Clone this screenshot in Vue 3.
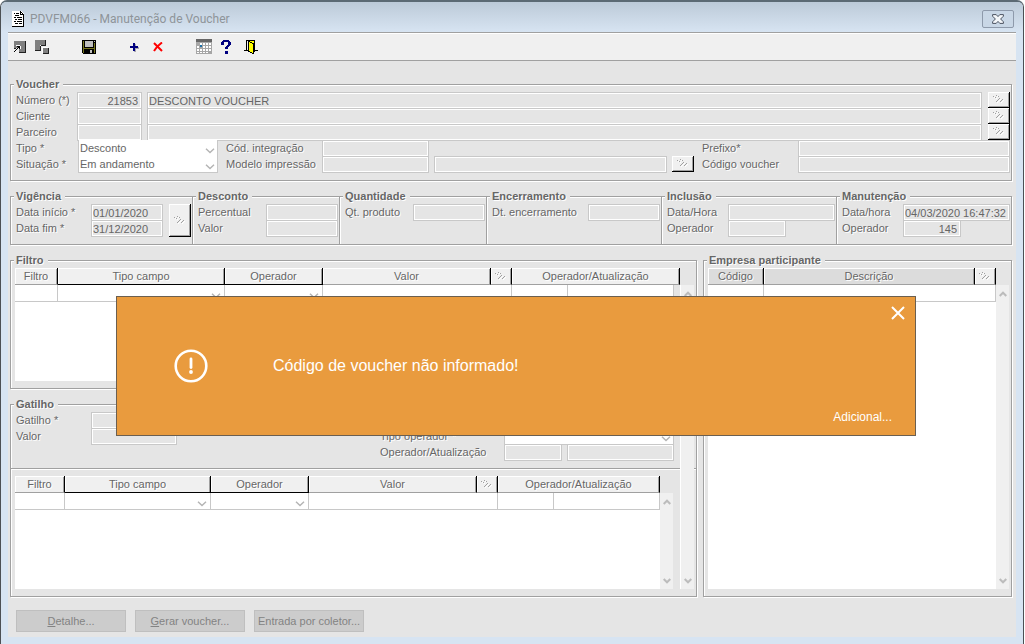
<script setup>
import { ref } from 'vue'

const people = [
  { id: 'numero', label: 'Número (*)', code: '21853', name: 'DESCONTO VOUCHER' },
  { id: 'cliente', label: 'Cliente', code: '', name: '' },
  { id: 'parceiro', label: 'Parceiro', code: '', name: '' }
]

const headings = ['Filtro', 'Tipo campo', 'Operador', 'Valor']

const tipo = ref('Desconto')
const situacao = ref('Em andamento')
const alertOpen = ref(true)
</script>

<template>
  <div class="window">
    <svg class="defs" aria-hidden="true">
      <symbol id="lookup" viewBox="0 0 11 9">
        <path fill="#fff" d="M1 2h1v1h-1zM3 3h1v1h-1zM4 1h1v1h-1zM4 7h1v1h-1zM5 6h1v1h-1zM6 5h1v1h-1zM7 4h1v1h-1zM8 7h1v1h-1zM9 6h1v1h-1zM10 5h1v1h-1z" />
        <path fill="#a0a0a0" d="M0 1h1v1h-1zM2 2h1v1h-1zM3 0h1v1h-1zM5 1h1v1h-1zM3 6h1v1h-1zM4 5h1v1h-1zM5 4h1v1h-1zM6 3h1v1h-1zM7 6h1v1h-1zM8 5h1v1h-1zM9 4h1v1h-1z" />
      </symbol>
      <symbol id="down" viewBox="0 0 10 6">
        <path fill="none" stroke="#b4b4b4" stroke-width="1.4" d="M1 .8L5 4.6L9 .8" />
      </symbol>
      <symbol id="arrow-up" viewBox="0 0 8 6">
        <path fill="none" stroke="#bcbcbc" stroke-width="2" d="M.7 5L4 1.7L7.3 5" />
      </symbol>
      <symbol id="arrow-down" viewBox="0 0 8 6">
        <path fill="none" stroke="#bcbcbc" stroke-width="2" d="M.7 1L4 4.3L7.3 1" />
      </symbol>
    </svg>

    <header class="titlebar">
      <svg class="doc" viewBox="0 0 13 17" shape-rendering="crispEdges" aria-hidden="true">
        <path fill="#fff" d="M0 0h9l3 3v13H0z" />
        <path fill="#000" d="M0 15h12v1H0zM11 3h1v13h-1zM8 0h1v3h3v1H8zM9 1h1v1H9zM10 2h1v1h-1z" />
        <path fill="#000" d="M2 2h1v1H2zM4 2h3v1H4zM3 4h4v1H3zM2 6h2v1H2zM5 6h5v1H5zM3 8h2v1H3zM6 8h4v1H6zM2 10h2v1H2zM5 10h5v1H5zM3 12h3v1H3zM7 12h3v1H7z" />
      </svg>
      <h1>PDVFM066 - Manutenção de Voucher</h1>
      <button type="button" class="close" aria-label="Fechar janela">
        <svg width="12" height="10" viewBox="0 0 12 10" aria-hidden="true">
          <path fill="#f4f7fa" stroke="#4a5260" d="M.6.6h3.600L6 2.600L7.800.6h3.600v1.600L8.600 5l2.800 2.800v1.600H7.800L6 7.400L4.200 9.400H.6V7.800L3.400 5L.6 2.200z" />
        </svg>
      </button>
    </header>

    <nav class="toolbar" aria-label="Ferramentas">
      <button type="button" aria-label="Selecionar">
        <svg width="12" height="12" viewBox="0 0 12 12" shape-rendering="crispEdges">
          <path fill="#808080" d="M0 0h11v11H5V7H0z" />
          <path fill="#222" d="M11 0h1v12H5v-1h6zM0 7h2v1H0z" />
          <path fill="#fff" d="M2 4h4v1H2zM6 5h1v3H6zM4 6h1v1H4zM3 7h1v1H3zM2 8h1v1H2zM1 9h1v1H1z" />
          <path fill="#000" d="M3 5h3v3H5V7H4v1H3v1H2v1H1v1H0v-1h1V9h1V8h1V7h1V6H3z" />
        </svg>
      </button>
      <button type="button" aria-label="Limpar">
        <svg width="14" height="14" viewBox="0 0 14 14" shape-rendering="crispEdges">
          <path fill="#808080" d="M0 0h10v5H5v5H0z" />
          <path fill="#222" d="M10 0h1v6H6V5h4zM0 10h5V6h1v5H0z" />
          <path fill="#fff" d="M7 7h6v1H8v5H7z" />
          <path fill="#808080" d="M8 8h5v5H8z" />
          <path fill="#222" d="M13 8h1v6H8v-1h5z" />
        </svg>
      </button>
      <button type="button" class="gap-save" aria-label="Salvar">
        <svg width="14" height="14" viewBox="0 0 14 14" shape-rendering="crispEdges">
          <path fill="#000" d="M0 0h14v14H1l-1-1z" />
          <path fill="#77771f" d="M1 1h1v12H1zM12 3h1v10h-1zM2 8h10v1H2z" />
          <path fill="#c0c0c0" d="M3 1h8v6H3zM12 1h1v1h-1zM8 10h2v3H8z" />
        </svg>
      </button>
      <button type="button" class="gap-add" aria-label="Adicionar">
        <svg width="10" height="10" viewBox="0 0 10 10" shape-rendering="crispEdges">
          <path fill="#a8a8b0" d="M5 2h2v3h3v2H7v3H5z" />
          <path fill="#000080" d="M4 1h2v3h3v2H6v3H4V6H1V4h3z" />
        </svg>
      </button>
      <button type="button" class="gap-del" aria-label="Excluir">
        <svg width="10" height="10" viewBox="0 0 10 10">
          <path fill="none" stroke="#f00" stroke-width="2" d="M1 1L9 9M9 .5Q4 4 1 9" />
        </svg>
      </button>
      <button type="button" class="gap-cal" aria-label="Calendário">
        <svg width="16" height="16" viewBox="0 0 16 16" shape-rendering="crispEdges">
          <path fill="#a6a6a6" d="M0 3h16v12H0z" />
          <path fill="#666" d="M0 0h16v3H0z" />
          <path fill="#fff" d="M4 4h2v2H4zM7 4h2v2H7zM10 4h2v2h-2zM13 4h2v2h-2zM1 7h2v2H1zM7 7h2v2H7zM10 7h2v2h-2zM13 7h2v2h-2zM1 10h2v2H1zM4 10h2v2H4zM7 10h2v2H7zM10 10h2v2h-2zM13 10h2v2h-2zM1 13h2v1H1zM4 13h2v1H4zM7 13h2v1H7zM10 13h2v1h-2z" />
          <path fill="#1c6fa5" d="M4 6h2v2H4z" />
        </svg>
      </button>
      <button type="button" aria-label="Ajuda">
        <svg width="10" height="14" viewBox="0 0 10 14" shape-rendering="crispEdges">
          <path fill="#000080" d="M2 0h6v1h1v1h1v3H9v1H8v1H7v2H4V7h1V6h1V5h1V2H3v3H0V2h1V1h1zM4 11h3v3H4z" />
        </svg>
      </button>
      <button type="button" class="gap-exit" aria-label="Sair">
        <svg width="14" height="14" viewBox="0 0 14 14" shape-rendering="crispEdges">
          <path fill="#000" d="M2 0h9v10h3v1h-3v1h-1V1H3v9h1v1H0v-1h2z" />
          <path fill="#000" d="M4 1h2v1h2v1h2v11H8v-1H6v-1H4z" />
          <path fill="#ff0" d="M5 2h1v1h2v1h1v9H8v-1H6v-1H5zM6 1h4v2H8V2H6z" />
        </svg>
      </button>
    </nav>

    <main class="content">
      <fieldset>
        <legend>Voucher</legend>
        <div v-for="p in people" :key="p.id" class="row person">
          <label :for="p.id">{{ p.label }}</label>
          <input :id="p.id" class="right" type="text" :value="p.code" readonly />
          <input class="second" type="text" :value="p.name" readonly :aria-label="p.label + ' descrição'" />
          <button type="button" class="lookup" :aria-label="'Procurar ' + p.label"><svg><use href="#lookup" /></svg></button>
        </div>
        <div class="row detail">
          <label for="tipo">Tipo *</label>
          <span class="select">
            <select id="tipo" v-model="tipo"><option>Desconto</option></select>
            <svg><use href="#down" /></svg>
          </span>
          <label for="integracao" class="indent">Cód. integração</label>
          <input id="integracao" type="text" readonly />
          <label for="prefixo" class="indent prefix">Prefixo*</label>
          <input id="prefixo" class="last" type="text" readonly />
        </div>
        <div class="row detail">
          <label for="situacao">Situação *</label>
          <span class="select">
            <select id="situacao" v-model="situacao"><option>Em andamento</option></select>
            <svg><use href="#down" /></svg>
          </span>
          <label for="modelo" class="indent">Modelo impressão</label>
          <input id="modelo" type="text" readonly />
          <input class="model-name" type="text" readonly aria-label="Nome do modelo" />
          <button type="button" class="lookup model-find" aria-label="Procurar modelo"><svg><use href="#lookup" /></svg></button>
          <label for="codigo" class="indent prefix">Código voucher</label>
          <input id="codigo" class="last" type="text" readonly />
        </div>
      </fieldset>

      <div class="groups">
        <fieldset class="vigencia">
          <legend>Vigência</legend>
          <div class="fields">
            <label for="inicio">Data início *</label>
            <input id="inicio" type="text" value="01/01/2020" readonly />
            <label for="fim">Data fim *</label>
            <input id="fim" type="text" value="31/12/2020" readonly />
          </div>
          <button type="button" class="lookup tall" aria-label="Escolher período"><svg><use href="#lookup" /></svg></button>
        </fieldset>
        <fieldset>
          <legend>Desconto</legend>
          <div class="fields short">
            <label for="percentual">Percentual</label>
            <input id="percentual" type="text" readonly />
            <label for="desconto-valor">Valor</label>
            <input id="desconto-valor" type="text" readonly />
          </div>
        </fieldset>
        <fieldset>
          <legend>Quantidade</legend>
          <div class="fields short">
            <label for="quantidade">Qt. produto</label>
            <input id="quantidade" type="text" readonly />
          </div>
        </fieldset>
        <fieldset>
          <legend>Encerramento</legend>
          <div class="fields long">
            <label for="encerramento">Dt. encerramento</label>
            <input id="encerramento" type="text" readonly />
          </div>
        </fieldset>
        <fieldset>
          <legend>Inclusão</legend>
          <div class="fields audit">
            <label for="inclusao">Data/Hora</label>
            <input id="inclusao" type="text" readonly />
            <label for="inclusao-op">Operador</label>
            <input id="inclusao-op" class="small" type="text" readonly />
          </div>
        </fieldset>
        <fieldset>
          <legend>Manutenção</legend>
          <div class="fields audit">
            <label for="manutencao">Data/hora</label>
            <input id="manutencao" type="text" value="04/03/2020 16:47:32" readonly />
            <label for="manutencao-op">Operador</label>
            <input id="manutencao-op" class="small right" type="text" value="145" readonly />
          </div>
        </fieldset>
      </div>

      <div class="panels">
        <div class="stack">
          <fieldset class="filtro">
            <legend>Filtro</legend>
            <div class="sheet">
              <table>
                <colgroup>
                  <col class="c-filtro" /><col class="c-tipo" /><col class="c-operador" /><col />
                  <col class="c-find" /><col class="c-op" /><col class="c-at" /><col class="c-edge" />
                </colgroup>
                <thead>
                  <tr>
                    <th v-for="(h, i) in headings" :key="h" :class="{ dark: i === 1 || i === 2 }">{{ h }}</th>
                    <th><button type="button" aria-label="Procurar valor"><svg><use href="#lookup" /></svg></button></th>
                    <th colspan="3">Operador/Atualização</th>
                  </tr>
                </thead>
                <tbody>
                  <tr>
                    <td><input type="text" aria-label="Filtro" /></td>
                    <td><span class="select"><select aria-label="Tipo campo"></select><svg><use href="#down" /></svg></span></td>
                    <td><span class="select"><select aria-label="Operador"></select><svg><use href="#down" /></svg></span></td>
                    <td colspan="2"><input type="text" aria-label="Valor" /></td>
                    <td><input type="text" aria-label="Operador da atualização" /></td>
                    <td><input type="text" aria-label="Atualização" /></td>
                    <td></td>
                  </tr>
                </tbody>
              </table>
            </div>
          </fieldset>

          <fieldset class="gatilho">
            <legend>Gatilho</legend>
            <div class="trigger">
              <div class="fields">
                <label for="gatilho">Gatilho *</label>
                <input id="gatilho" type="text" readonly />
                <label for="gatilho-valor">Valor</label>
                <input id="gatilho-valor" type="text" readonly />
              </div>
              <div class="operator">
                <label for="tipo-op">Tipo operador *</label>
                <span class="select"><select id="tipo-op"></select><svg><use href="#down" /></svg></span>
                <label for="op-at">Operador/Atualização</label>
                <input id="op-at" type="text" readonly />
                <input class="update" type="text" readonly aria-label="Atualização do gatilho" />
              </div>
            </div>
            <hr />
            <div class="sheet-row">
              <div class="sheet">
                <table>
                  <colgroup>
                    <col class="c-filtro2" /><col class="c-tipo2" /><col class="c-operador" /><col />
                    <col class="c-find" /><col class="c-op" /><col class="c-at" />
                  </colgroup>
                  <thead>
                    <tr>
                      <th v-for="(h, i) in headings" :key="h" :class="{ dark: i === 1 || i === 2 }">{{ h }}</th>
                      <th><button type="button" aria-label="Procurar valor do gatilho"><svg><use href="#lookup" /></svg></button></th>
                      <th colspan="2">Operador/Atualização</th>
                    </tr>
                  </thead>
                  <tbody>
                    <tr>
                      <td><input type="text" aria-label="Filtro" /></td>
                      <td><span class="select"><select aria-label="Tipo campo"></select><svg><use href="#down" /></svg></span></td>
                      <td><span class="select"><select aria-label="Operador"></select><svg><use href="#down" /></svg></span></td>
                      <td colspan="2"><input type="text" aria-label="Valor" /></td>
                      <td><input type="text" aria-label="Operador da atualização" /></td>
                      <td><input type="text" aria-label="Atualização" /></td>
                    </tr>
                  </tbody>
                </table>
              </div>
              <div class="scroll">
                <button type="button" aria-label="Subir"><svg><use href="#arrow-up" /></svg></button>
                <button type="button" aria-label="Descer"><svg><use href="#arrow-down" /></svg></button>
              </div>
            </div>
          </fieldset>
          <div class="scroll outer">
            <button type="button" aria-label="Subir"><svg><use href="#arrow-up" /></svg></button>
            <button type="button" aria-label="Descer"><svg><use href="#arrow-down" /></svg></button>
          </div>
        </div>

        <fieldset class="empresa">
          <legend>Empresa participante</legend>
          <div class="sheet-row">
            <div class="sheet">
              <table class="flat">
                <colgroup><col class="c-op" /><col /><col class="c-find" /></colgroup>
                <thead>
                  <tr>
                    <th>Código</th>
                    <th>Descrição</th>
                    <th class="find"><button type="button" aria-label="Procurar empresa"><svg><use href="#lookup" /></svg></button></th>
                  </tr>
                </thead>
                <tbody>
                  <tr>
                    <td><input type="text" aria-label="Código" /></td>
                    <td colspan="2"><input type="text" aria-label="Descrição" /></td>
                  </tr>
                </tbody>
              </table>
            </div>
            <div class="scroll">
              <button type="button" aria-label="Subir"><svg><use href="#arrow-up" /></svg></button>
              <button type="button" aria-label="Descer"><svg><use href="#arrow-down" /></svg></button>
            </div>
          </div>
        </fieldset>
      </div>

      <footer class="actions">
        <button type="button"><u>D</u>etalhe...</button>
        <button type="button"><u>G</u>erar voucher...</button>
        <button type="button">Entrada por coletor...</button>
      </footer>
    </main>

    <section v-if="alertOpen" class="alert" role="alertdialog" aria-labelledby="alert-text">
      <svg class="warn" viewBox="0 0 34 34" aria-hidden="true">
        <circle cx="17" cy="17" r="15.300" fill="none" stroke="#fff" stroke-width="2.600" />
        <path stroke="#fff" stroke-width="2.800" stroke-linecap="round" d="M17 10V18.500" />
        <circle cx="17" cy="23" r="1.900" fill="#fff" />
      </svg>
      <p id="alert-text">Código de voucher não informado!</p>
      <button type="button" class="dismiss" aria-label="Fechar aviso" @click="alertOpen = false">
        <svg width="14" height="14" viewBox="0 0 14 14"><path stroke="#fff" stroke-width="2" d="M1 1L13 13M13 1L1 13" /></svg>
      </button>
      <a href="#" class="more" @click.prevent>Adicional...</a>
    </section>
  </div>
</template>

<style>
body {
  background: #fff;
}
</style>

<style scoped>
.window {
  position: relative;
  box-sizing: border-box;
  display: flex;
  flex-direction: column;
  min-height: 100vh;
  margin-right: 1px;
  padding: 0 7px 7px;
  border: solid #4c5054;
  border-width: 2px 1px 0;
  border-top-color: #5c6a74;
  border-radius: 7px 7px 0 0;
  background: #d7e4f2;
  color: #666;
  font: 11px/16px "Liberation Sans", Arial, sans-serif;
}
.window * {
  box-sizing: border-box;
}
.defs {
  position: absolute;
  width: 0;
  height: 0;
}
button,
input,
select {
  margin: 0;
  padding: 0;
  border: 0;
  border-radius: 0;
  background: none;
  color: inherit;
  font: inherit;
}
.titlebar {
  display: flex;
  align-items: center;
  height: 30px;
  margin: 0 -7px;
  padding: 4px 9px 0 11px;
  border-radius: 5px 5px 0 0;
  background: linear-gradient(#bccad8, #d7e4f2);
}
.doc {
  width: 13px;
  height: 17px;
}
h1 {
  flex: 1;
  margin: 0 0 0 5px;
  color: #8e9499;
  font: 400 12px/16px Roboto, "Open Sans", sans-serif;
}
.close {
  display: flex;
  align-items: center;
  justify-content: center;
  width: 32px;
  height: 18px;
  margin-bottom: 1px;
  border: 1px solid #8e9aab;
  border-radius: 2px;
  background: #c9d7e6;
}
.toolbar {
  display: flex;
  align-items: center;
  height: 29px;
  padding-left: 1px;
  border-top: 1px solid #a0a0a0;
  border-bottom: 1px solid #a0a0a0;
  background: #f0f0f0;
  box-shadow: inset 0 1px 0 #fff;
}
.toolbar button {
  display: flex;
  align-items: center;
  justify-content: center;
  width: 22px;
  height: 22px;
}
.toolbar .gap-save {
  margin-left: 25px;
}
.toolbar .gap-add {
  margin-left: 23px;
}
.toolbar .gap-del {
  margin-left: 2px;
}
.toolbar .gap-cal {
  margin-left: 24px;
}
.toolbar .gap-exit {
  margin-left: 3px;
}
.content {
  flex: 1;
  display: flex;
  flex-direction: column;
  padding: 17px 4px 5px 2px;
  background: #e5e5e5;
}
fieldset {
  min-width: 0;
  margin: 0;
  padding: 1px 1px 8px 4px;
  border: 1px solid #a0a0a0;
  box-shadow: 1px 1px 0 #fff, inset 1px 1px 0 #fff;
}
legend {
  margin-left: -1px;
  padding: 0 4px 0 2px;
  background: #e5e5e5;
  font-weight: 700;
  line-height: 13px;
  text-shadow: 1px 1px 0 #fff;
}
label {
  padding-left: 1px;
  white-space: nowrap;
  text-shadow: 1px 1px 0 #fff;
}
input {
  min-width: 0;
  width: 100%;
  height: 17px;
  padding: 1px 3px 0 1px;
  border: 1px solid #c8c8c8;
  background: #e5e5e5;
  box-shadow: inset 0 0 0 1px #fff;
  line-height: 14px;
}
.right {
  text-align: right;
}
.row {
  display: grid;
  height: 16px;
}
.person {
  grid-template-columns: 62px 65px 5px 1fr 6px 22px;
}
.person .second {
  grid-column: 4;
}
.person .lookup {
  grid-column: 6;
}
.detail {
  grid-template-columns: 63px 140px 104px 107px 5px 233px 5px 22px 104px 1fr;
}
.detail .indent {
  padding-left: 8px;
}
.detail .model-name {
  grid-column: 6;
}
.detail .model-find {
  grid-column: 8;
}
.detail .prefix {
  grid-column: 9;
}
.detail .last {
  grid-column: 10;
}
.select {
  position: relative;
  display: block;
  height: 16px;
}
.select select {
  display: block;
  width: 100%;
  height: 17px;
  padding: 0 16px 0 1px;
  border: solid #c8c8c8;
  border-width: 0 1px 1px;
  background: #fff;
  appearance: none;
}
.select svg {
  position: absolute;
  top: 8px;
  right: 3px;
  width: 10px;
  height: 6px;
  pointer-events: none;
}
.lookup {
  display: flex;
  align-items: center;
  justify-content: center;
  height: 16px;
  border: solid #000;
  border-width: 0 1px 1px 0;
  background: #f0f0f0;
  box-shadow: inset 1px 1px 0 #fff, inset -1px -1px 0 #a0a0a0;
}
.lookup svg,
th svg {
  width: 11px;
  height: 9px;
  shape-rendering: crispEdges;
}
.lookup.tall {
  width: 22px;
  height: 33px;
}
.groups {
  display: grid;
  grid-template-columns: 182fr 147fr 147fr 175fr 175fr 176fr;
  margin-top: 9px;
}
.groups fieldset {
  min-height: 54px;
  padding-bottom: 7px;
}
.groups fieldset:not(:last-child) {
  margin-right: -1px;
}
.groups .vigencia {
  display: grid;
  grid-template-columns: 147px 22px;
  column-gap: 7px;
}
.fields {
  display: grid;
  grid-template-columns: 76px 72px;
  grid-auto-rows: 16px;
}
.fields.short {
  grid-template-columns: 69px 1fr;
}
.fields.long {
  grid-template-columns: 97px 1fr;
}
.fields.audit {
  grid-template-columns: 62px 1fr;
}
.small {
  width: 58px;
}
.panels {
  flex: 1;
  display: grid;
  grid-template-columns: 687fr 309fr;
  column-gap: 6px;
  margin-top: 9px;
}
.stack {
  position: relative;
  display: flex;
  flex-direction: column;
  min-width: 0;
}
.filtro {
  padding-right: 16px;
  padding-bottom: 7px;
}
.filtro .sheet {
  height: 113px;
}
.gatilho {
  flex: 1;
  display: flex;
  flex-direction: column;
  margin-top: 9px;
  padding-bottom: 7px;
}
.trigger {
  display: flex;
  justify-content: space-between;
  height: 56px;
  padding-right: 21px;
}
.trigger .fields {
  grid-template-columns: 76px 86px;
}
.operator {
  display: grid;
  grid-template-columns: 125px 58px 5px 107px;
  grid-auto-rows: 16px;
  padding-top: 16px;
}
.operator .select {
  grid-column: 2 / 5;
}
.operator .update {
  grid-column: 4;
}
hr {
  width: calc(100% + 5px);
  height: 2px;
  margin: 0 0 6px -4px;
  border: 0;
  border-top: 1px solid #a0a0a0;
  background: #fff;
}
.sheet-row {
  flex: 1;
  display: flex;
  height: 100%;
}
.gatilho .sheet-row {
  height: auto;
  min-height: 113px;
  padding-right: 22px;
}
.sheet {
  flex: 1;
  min-width: 0;
  background: #fff;
}
table {
  width: 100%;
  table-layout: fixed;
  border-spacing: 0;
  background: #e5e5e5;
}
.c-filtro {
  width: 43px;
}
.c-tipo {
  width: 167px;
}
.c-filtro2 {
  width: 50px;
}
.c-tipo2 {
  width: 146px;
}
.c-operador {
  width: 98px;
}
.c-find {
  width: 21px;
}
.c-op {
  width: 56px;
}
.c-at {
  width: 106px;
}
.c-edge {
  width: 6px;
}
th {
  height: 17px;
  padding: 0;
  border: solid #a0a0a0;
  border-width: 0 1px 1px 0;
  border-right-color: #000;
  background: #f0f0f0;
  box-shadow: inset 1px 1px 0 #fff, inset -1px 0 0 #a0a0a0;
  font-weight: 400;
  line-height: 16px;
  text-shadow: 1px 1px 0 #fff;
}
th.dark {
  border-bottom-color: #000;
}
.flat th {
  background: #dcdcdc;
}
.flat .find {
  background: #f0f0f0;
}
th button {
  display: flex;
  align-items: center;
  justify-content: center;
  width: 100%;
  height: 15px;
  padding-right: 1px;
}
td {
  height: 17px;
  padding: 0;
  border: solid #c8c8c8;
  border-width: 0 1px 1px 0;
  background: #fff;
}
td:empty {
  border: 0;
  background: #e5e5e5;
}
td input {
  display: block;
  height: 16px;
  border: 0;
  background: #fff;
  box-shadow: none;
}
td .select select {
  height: 16px;
  border: 0;
}
.scroll {
  display: flex;
  flex-direction: column;
  justify-content: space-between;
  width: 13px;
  margin-top: 17px;
  background: #f0f0f0;
}
.scroll button {
  display: flex;
  align-items: center;
  justify-content: center;
  height: 17px;
}
.scroll svg {
  width: 8px;
  height: 6px;
}
.scroll.outer {
  position: absolute;
  top: 14px;
  right: 3px;
  bottom: 8px;
  width: 14px;
  border-left: 1px solid #fff;
}
.empresa {
  display: flex;
  padding-right: 2px;
  padding-bottom: 7px;
}
.actions {
  display: flex;
  gap: 9px;
  padding: 13px 0 0 6px;
}
.actions button {
  width: 110px;
  height: 22px;
  border: 1px solid #bfbfbf;
  background: #ccc;
  color: #838383;
}
.alert {
  position: absolute;
  top: 294px;
  left: 115px;
  right: 107px;
  display: flex;
  align-items: center;
  height: 140px;
  padding-left: 57px;
  border: 1px solid #6b5f50;
  background: #e99b3e;
  color: #fff;
}
.warn {
  width: 34px;
  height: 34px;
}
.alert p {
  margin: 0 0 0 65px;
  font-size: 16px;
  line-height: 20px;
}
.dismiss {
  position: absolute;
  top: 9px;
  right: 10px;
  width: 14px;
  height: 14px;
}
.dismiss svg {
  display: block;
}
.more {
  position: absolute;
  right: 23px;
  bottom: 10px;
  color: #fff;
  font-size: 12px;
  text-decoration: none;
}
</style>
